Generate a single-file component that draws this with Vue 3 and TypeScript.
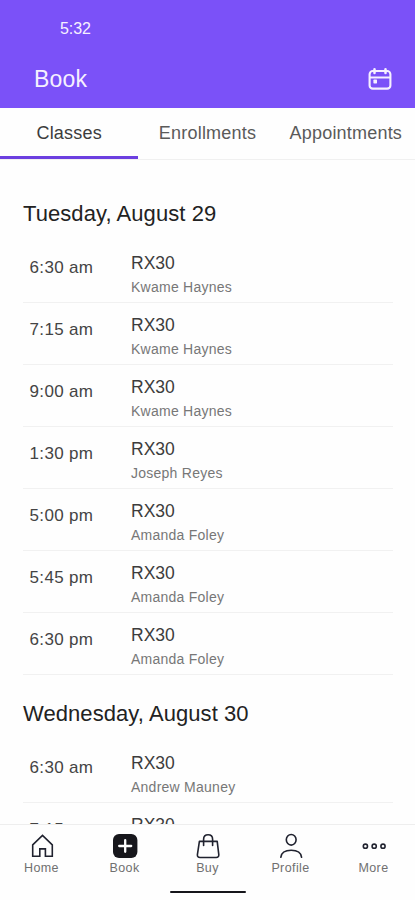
<script setup lang="ts">
interface Session {
  time: string
  title: string
  coach: string
}
interface Day {
  label: string
  sessions: Session[]
}

const tabs: string[] = ['Classes', 'Enrollments', 'Appointments']
const activeTab = 'Classes'

const rx = (time: string, coach: string): Session => ({ time, title: 'RX30', coach })

const days: Day[] = [
  {
    label: 'Tuesday, August 29',
    sessions: [
      rx('6:30 am', 'Kwame Haynes'),
      rx('7:15 am', 'Kwame Haynes'),
      rx('9:00 am', 'Kwame Haynes'),
      rx('1:30 pm', 'Joseph Reyes'),
      rx('5:00 pm', 'Amanda Foley'),
      rx('5:45 pm', 'Amanda Foley'),
      rx('6:30 pm', 'Amanda Foley'),
    ],
  },
  {
    label: 'Wednesday, August 30',
    sessions: [rx('6:30 am', 'Andrew Mauney'), rx('7:15 am', '')],
  },
]

const navItems: string[] = ['Home', 'Book', 'Buy', 'Profile', 'More']
</script>

<template>
  <div class="screen">
    <header class="header">
      <div class="clock">5:32</div>
      <div class="title-row">
        <h1 class="title">Book</h1>
        <svg class="calendar" viewBox="0 0 26 24" fill="none" stroke="currentColor" stroke-linecap="round">
          <rect x="2.6" y="4" width="20.8" height="17.6" rx="3.2" stroke-width="2.1" />
          <path d="M3 10.5H23" stroke-width="1.8" />
          <path d="M7.5 2.2V6M18.5 2.2V6" stroke-width="2.5" />
          <rect x="6.4" y="12.6" width="3.6" height="3.8" rx=".6" fill="currentColor" stroke="none" />
        </svg>
      </div>
    </header>

    <nav class="tabs">
      <button v-for="tab in tabs" :key="tab" class="tab" :class="{ active: tab === activeTab }">{{ tab }}</button>
    </nav>

    <main class="schedule">
      <section v-for="day in days" :key="day.label" class="day">
        <h2 class="day-label">{{ day.label }}</h2>
        <ul class="sessions">
          <li v-for="s in day.sessions" :key="s.time" class="session">
            <span class="time">{{ s.time }}</span>
            <div class="info">
              <span class="name">{{ s.title }}</span>
              <span v-if="s.coach" class="coach">{{ s.coach }}</span>
            </div>
          </li>
        </ul>
      </section>
    </main>

    <footer class="bottom">
      <nav class="bottom-nav">
        <a v-for="item in navItems" :key="item" class="nav-item">
          <svg class="nav-icon" viewBox="0 0 28 28" fill="none" stroke="#20222f" stroke-width="1.6" stroke-linejoin="round" stroke-linecap="round">
            <path v-if="item === 'Home'" stroke-linejoin="miter" d="M4.7 12.9L14.5 3.4L24.3 12.9V24.2H17.4V16.9H11.8V24.2H4.7Z" />
            <template v-else-if="item === 'Book'">
              <rect x="2" y="2" width="24.4" height="24" rx="6" fill="#17171c" stroke="none" />
              <path d="M14.2 8.2V19.8M8.2 14H20.2" stroke="#fff" stroke-width="2.3" />
            </template>
            <template v-else-if="item === 'Buy'">
              <path d="M5.4 9.4H23.2L24.8 22.7Q24.9 25.5 22.2 25.5H6Q3.2 25.5 3.4 22.7Z" />
              <path d="M9.6 13.4V7.2Q9.6 2.7 14.1 2.7Q18.6 2.7 18.6 7.2V13.4" />
            </template>
            <template v-else-if="item === 'Profile'">
              <ellipse cx="14.2" cy="7.8" rx="4.9" ry="5.3" />
              <path d="M3.8 25.3C4.4 20.3 8.4 18.2 14.2 18.2S24 20.3 24.6 25.3" />
            </template>
            <template v-else>
              <circle cx="5.4" cy="14.2" r="2.1" />
              <circle cx="14.2" cy="14.2" r="2.1" />
              <circle cx="23" cy="14.2" r="2.1" />
            </template>
          </svg>
          <span class="nav-label">{{ item }}</span>
        </a>
      </nav>
      <div class="home-bar"></div>
    </footer>
  </div>
</template>

<style>
body {
  background: #fff;
}
</style>

<style scoped>
.screen {
  display: flex;
  flex-direction: column;
  width: 415px;
  height: 900px;
  overflow: hidden;
  background: #fefefe;
  font-family: "Liberation Sans", Arial, sans-serif;
}
.header {
  flex: none;
  height: 108px;
  box-sizing: border-box;
  padding-top: 19px;
  background: #7b51f8;
  color: #f6f0ff;
}
.clock {
  padding-left: 60px;
  font: 16px/20px "Liberation Sans", Arial, sans-serif;
  letter-spacing: -0.1px;
}
.title-row {
  display: flex;
  align-items: center;
  justify-content: space-between;
  height: 28px;
  margin-top: 26px;
  padding: 0 22px 0 34px;
}
.title {
  margin: 0;
  font-size: 23px;
  line-height: 28px;
  font-weight: 400;
  letter-spacing: 0.2px;
}
.calendar {
  width: 26px;
  height: 24px;
}
.tabs {
  flex: none;
  display: grid;
  grid-template-columns: repeat(3, 1fr);
  height: 52px;
  box-sizing: border-box;
  border-bottom: 1px solid #f0f0f0;
}
.tab {
  padding: 2px 0 0;
  border: 0;
  border-bottom: 3px solid transparent;
  background: none;
  font: 18px/46px "Liberation Sans", Arial, sans-serif;
  letter-spacing: 0.2px;
  color: #5a5a5a;
  white-space: nowrap;
}
.tab.active {
  border-bottom-color: #6c3fe0;
  color: #3c3c3c;
}
.schedule {
  flex: 1;
  min-height: 0;
  overflow: hidden;
  padding: 40px 22px 0 23px;
}
.day-label {
  margin: 0;
  height: 28px;
  font-size: 22px;
  line-height: 28px;
  font-weight: 400;
  letter-spacing: 0.07px;
  color: #222;
}
.sessions {
  margin: 0 0 25px;
  padding: 13px 0 0;
  list-style: none;
}
.session {
  display: flex;
  height: 62px;
  box-sizing: border-box;
  border-bottom: 1px solid #f1f1f1;
}
.time {
  width: 101.5px;
  padding: 17px 0 0 6.5px;
  font-size: 17px;
  line-height: 20px;
  letter-spacing: 0.35px;
  color: #444;
}
.info {
  display: flex;
  flex-direction: column;
  padding-top: 12px;
}
.name {
  font-size: 17.5px;
  line-height: 20px;
  color: #3c3c3c;
}
.coach {
  margin-top: 5px;
  font-size: 14px;
  line-height: 18px;
  letter-spacing: 0.25px;
  color: #777;
}
.bottom {
  flex: none;
  height: 76px;
  box-sizing: border-box;
  border-top: 1px solid #eee;
  background: #fefefe;
}
.bottom-nav {
  display: grid;
  grid-template-columns: repeat(5, 1fr);
  height: 66px;
}
.nav-item {
  display: flex;
  flex-direction: column;
  align-items: center;
  padding-top: 7px;
}
.nav-icon {
  width: 28px;
  height: 28px;
}
.nav-label {
  font-size: 12.5px;
  line-height: 16px;
  letter-spacing: 0.4px;
  color: #707070;
}
.home-bar {
  width: 76px;
  height: 2px;
  margin: 0 auto;
  border-radius: 1px;
  background: #15151a;
}
</style>
